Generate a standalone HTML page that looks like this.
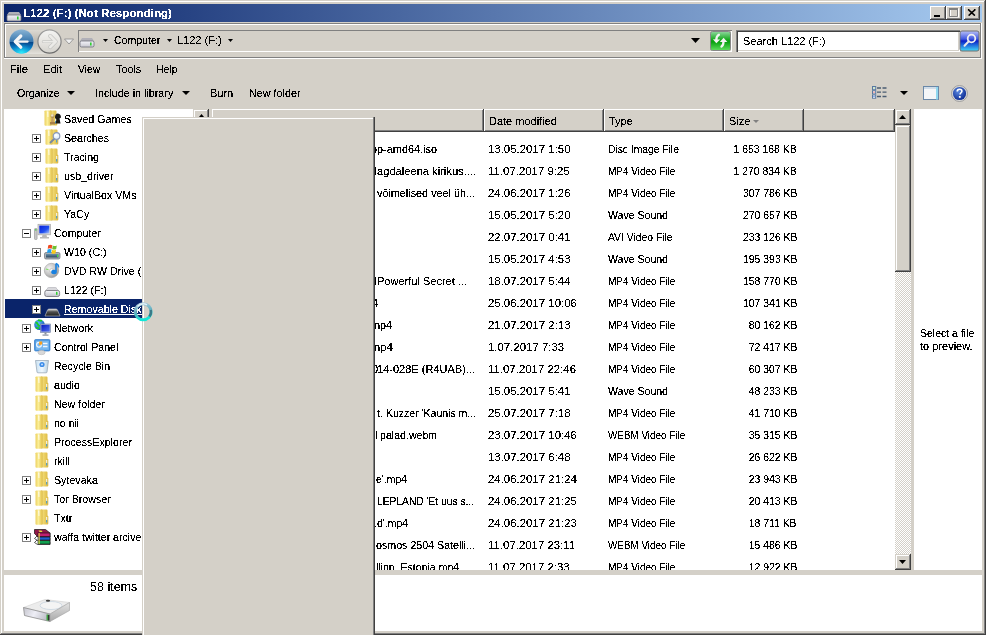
<!DOCTYPE html>
<html><head><meta charset="utf-8"><style>
html,body{margin:0;padding:0;}
body{width:986px;height:635px;overflow:hidden;position:relative;background:#d4d0c8;font-family:"Liberation Sans",sans-serif;font-size:11px;color:#000;}
.t{position:absolute;font:11px/13px "Liberation Sans",sans-serif;white-space:nowrap;filter:url(#crisp)}
.tb{position:absolute;font:bold 11px/13px "Liberation Sans",sans-serif;white-space:nowrap;color:#fff;filter:url(#crisp)}
svg{display:block;overflow:visible}
</style></head><body>
<svg width="0" height="0" style="position:absolute;left:0;top:0"><filter id="crisp" color-interpolation-filters="sRGB"><feComponentTransfer><feFuncA type="discrete" tableValues="0 0 1 1 1"/></feComponentTransfer></filter></svg>
<div style="position:absolute;left:1px;top:1px;width:984px;height:1px;background:#fff"></div>
<div style="position:absolute;left:1px;top:1px;width:1px;height:633px;background:#fff"></div>
<div style="position:absolute;left:984px;top:1px;width:1px;height:633px;background:#808080"></div>
<div style="position:absolute;left:1px;top:633px;width:984px;height:1px;background:#808080"></div>
<div style="position:absolute;left:985px;top:0px;width:1px;height:635px;background:#404040"></div>
<div style="position:absolute;left:0px;top:634px;width:986px;height:1px;background:#404040"></div>
<div style="position:absolute;left:4px;top:4px;width:978px;height:18px;background:linear-gradient(to right,#0a246a,#a6caf0)"></div>
<svg style="position:absolute;left:6px;top:7px" width="16" height="16" viewBox="0 0 16 16"><defs><linearGradient id="dg" x1="0" y1="0" x2="0" y2="1"><stop offset="0" stop-color="#f4f4fa"/><stop offset="1" stop-color="#c8c8d0"/></linearGradient></defs><path d="M3 5h10l2 3v6H1V8z" fill="#b0b0b8"/><rect x="1" y="8" width="14" height="6" rx="1.5" fill="url(#dg)" stroke="#707078" stroke-width="0.8"/><rect x="11" y="9.5" width="1.6" height="3" fill="#30d030"/></svg>
<div class="tb" style="left:23px;top:7px;transform:scaleX(1.0553);transform-origin:0 0">L122 (F:) (Not Responding)</div>
<div style="position:absolute;left:930px;top:6px;width:16px;height:14px;background:#d4d0c8;box-shadow:inset -1px -1px 0 #404040, inset 1px 1px 0 #fff, inset -2px -2px 0 #808080"></div>
<svg style="position:absolute;left:930px;top:6px" width="16" height="14" viewBox="0 0 16 14"><rect x="4" y="9" width="6" height="2" fill="#000"/></svg>
<div style="position:absolute;left:946px;top:6px;width:16px;height:14px;background:#d4d0c8;box-shadow:inset -1px -1px 0 #404040, inset 1px 1px 0 #fff, inset -2px -2px 0 #808080"></div>
<svg style="position:absolute;left:946px;top:6px" width="16" height="14" viewBox="0 0 16 14"><rect x="4.5" y="3" width="8" height="8" fill="none" stroke="#fff" stroke-width="1"/><path d="M3.5 2.5h8v8h-8z M3 2.5h9" fill="none" stroke="#808080" stroke-width="1"/><rect x="3" y="2" width="9" height="2" fill="#808080"/></svg>
<div style="position:absolute;left:964px;top:6px;width:16px;height:14px;background:#d4d0c8;box-shadow:inset -1px -1px 0 #404040, inset 1px 1px 0 #fff, inset -2px -2px 0 #808080"></div>
<svg style="position:absolute;left:964px;top:6px" width="16" height="14" viewBox="0 0 16 14"><path d="M4.5 3.5l6.5 6M4 3.5l6.5 6M11 3.5l-6.5 6M11.5 3.5l-6.5 6" stroke="#000" stroke-width="1.1"/></svg>
<div style="position:absolute;left:4px;top:23px;width:977px;height:1px;background:#808080"></div>
<div style="position:absolute;left:4px;top:23px;width:1px;height:35px;background:#808080"></div>
<div style="position:absolute;left:5px;top:24px;width:975px;height:1px;background:#fff"></div>
<div style="position:absolute;left:5px;top:24px;width:1px;height:33px;background:#fff"></div>
<div style="position:absolute;left:5px;top:57px;width:976px;height:1px;background:#808080"></div>
<div style="position:absolute;left:980px;top:24px;width:1px;height:34px;background:#808080"></div>
<div style="position:absolute;left:4px;top:58px;width:978px;height:1px;background:#fff"></div>
<div style="position:absolute;left:981px;top:23px;width:1px;height:36px;background:#fff"></div>
<div style="position:absolute;left:14px;top:30px;width:44px;height:24px;border-radius:12px/10px;background:linear-gradient(#dcd9d2,#bdb9b1 45%,#c8c4bc 70%,#e4e2dc)"></div>
<svg style="position:absolute;left:9px;top:29px" width="26" height="26" viewBox="0 0 26 26"><defs><linearGradient id="bu" x1="0" y1="0" x2="0" y2="1"><stop offset="0" stop-color="#8ab4d4"/><stop offset="0.5" stop-color="#3a78ae"/><stop offset="0.5" stop-color="#063e80"/><stop offset="0.75" stop-color="#0a78c0"/><stop offset="1" stop-color="#18c8f0"/></linearGradient><radialGradient id="bl" cx="0.5" cy="1" r="0.45"><stop offset="0" stop-color="#30f8ff" stop-opacity="0.95"/><stop offset="1" stop-color="#10a0e0" stop-opacity="0"/></radialGradient></defs><circle cx="12.5" cy="12.5" r="12.6" fill="#c8ccd0" opacity="0.6"/><circle cx="12.5" cy="12.5" r="12" fill="url(#bu)"/><circle cx="12.5" cy="12.5" r="12" fill="url(#bl)"/><path d="M11.8 7L6.2 12.6L11.8 18.2" fill="none" stroke="#f8f8f8" stroke-width="3.2" stroke-linecap="round" stroke-linejoin="round"/><path d="M8 12.6H18.6" stroke="#f4f4f4" stroke-width="2.2" stroke-linecap="round"/></svg>
<svg style="position:absolute;left:37px;top:29px" width="26" height="26" viewBox="0 0 26 26"><defs><linearGradient id="fw" x1="0" y1="0" x2="0" y2="1"><stop offset="0" stop-color="#f4f4f2"/><stop offset="0.6" stop-color="#e4e2de"/><stop offset="1" stop-color="#d4d2cc"/></linearGradient><linearGradient id="fr" x1="0" y1="0" x2="0" y2="1"><stop offset="0" stop-color="#a0a0a0"/><stop offset="1" stop-color="#6c6c6c"/></linearGradient></defs><circle cx="12.5" cy="12.5" r="11.6" fill="url(#fw)" stroke="url(#fr)" stroke-width="1.2"/><path d="M13.2 7L18.8 12.6L13.2 18.2" fill="none" stroke="#c4c4c2" stroke-width="4" stroke-linecap="round" stroke-linejoin="round"/><path d="M17 12.6H6.4" stroke="#c4c4c2" stroke-width="3" stroke-linecap="round"/><path d="M13.2 7L18.8 12.6L13.2 18.2" fill="none" stroke="#ecebe8" stroke-width="2.6" stroke-linecap="round" stroke-linejoin="round"/><path d="M17 12.6H6.4" stroke="#ecebe8" stroke-width="1.8" stroke-linecap="round"/></svg>
<svg style="position:absolute;left:64px;top:38px" width="10" height="8" viewBox="0 0 10 8"><path d="M0.5 1h9l-4.5 5z" fill="#f0f0f0" stroke="#8a8a8a" stroke-width="0.8"/></svg>
<div style="position:absolute;left:78px;top:30px;width:654px;height:22px;box-shadow:inset 1px 1px 0 #808080, inset -1px -1px 0 #fff;background:#d4d0c8"></div>
<svg style="position:absolute;left:79px;top:33px" width="16" height="16" viewBox="0 0 16 16"><defs><linearGradient id="dg" x1="0" y1="0" x2="0" y2="1"><stop offset="0" stop-color="#f4f4fa"/><stop offset="1" stop-color="#c8c8d0"/></linearGradient></defs><path d="M3 5h10l2 3v6H1V8z" fill="#b0b0b8"/><rect x="1" y="8" width="14" height="6" rx="1.5" fill="url(#dg)" stroke="#707078" stroke-width="0.8"/><rect x="11" y="9.5" width="1.6" height="3" fill="#30d030"/></svg>
<svg style="position:absolute;left:103px;top:39px" width="5" height="3" viewBox="0 0 5 3"><path d="M0 0h5l-2.5 3z" fill="#000"/></svg>
<div class="t" style="left:114px;top:34px;transform:scaleX(0.9586);transform-origin:0 0">Computer</div>
<svg style="position:absolute;left:167px;top:39px" width="5" height="3" viewBox="0 0 5 3"><path d="M0 0h5l-2.5 3z" fill="#000"/></svg>
<div class="t" style="left:177px;top:34px;">L122 (F:)</div>
<svg style="position:absolute;left:228px;top:39px" width="5" height="3" viewBox="0 0 5 3"><path d="M0 0h5l-2.5 3z" fill="#000"/></svg>
<svg style="position:absolute;left:691px;top:38px" width="9" height="5" viewBox="0 0 9 5"><path d="M0 0h9l-4.5 5z" fill="#000"/></svg>
<svg style="position:absolute;left:710px;top:31px" width="21" height="20" viewBox="0 0 21 20"><defs><linearGradient id="rg" x1="0" y1="0" x2="0" y2="1"><stop offset="0" stop-color="#90d8a0"/><stop offset="0.45" stop-color="#10a818"/><stop offset="0.55" stop-color="#08a010"/><stop offset="1" stop-color="#60e060"/></linearGradient></defs><rect x="0.5" y="0.5" width="20" height="19" rx="2" fill="url(#rg)" stroke="#888" stroke-width="1"/><path d="M2.9 8.2L10.2 8.5L6.3 12.3Z" fill="#f4f4f4"/><path d="M6.3 9c0-2.8.6-4.3 2.6-5.3" stroke="#f4f4f4" stroke-width="2.3" fill="none" stroke-linecap="round"/><path d="M9.8 10.9L17.3 11.1L13.6 6.8Z" fill="#f4f4f4"/><path d="M13.5 10.5c0 2.5-.5 4-2 5" stroke="#f4f4f4" stroke-width="2.3" fill="none" stroke-linecap="round"/></svg>
<div style="position:absolute;left:736px;top:30px;width:224px;height:22px;background:#fff;box-shadow:inset 1px 1px 0 #808080, inset 2px 2px 0 #404040, inset -1px -1px 0 #fff, inset -2px -2px 0 #d4d0c8"></div>
<div class="t" style="left:743px;top:35px;">Search L122 (F:)</div>
<svg style="position:absolute;left:959px;top:30px" width="21" height="22" viewBox="0 0 21 22"><defs><linearGradient id="sg" x1="0" y1="0" x2="0" y2="1"><stop offset="0" stop-color="#b8c0f8"/><stop offset="0.4" stop-color="#4058e0"/><stop offset="0.5" stop-color="#0a20c8"/><stop offset="1" stop-color="#40d8f8"/></linearGradient></defs><rect x="1" y="1" width="19" height="20" rx="2" fill="url(#sg)" stroke="#707070" stroke-width="1"/><circle cx="12.5" cy="8.5" r="3.8" fill="none" stroke="#f0f0f0" stroke-width="1.8"/><path d="M9.8 11.3L5.5 15.8" stroke="#e8e8e8" stroke-width="2" stroke-linecap="round"/></svg>
<div class="t" style="left:10px;top:63px;transform:scaleX(1.0226);transform-origin:0 0">File</div>
<div class="t" style="left:43px;top:63px;transform:scaleX(1.0106);transform-origin:0 0">Edit</div>
<div class="t" style="left:78px;top:63px;transform:scaleX(0.9408);transform-origin:0 0">View</div>
<div class="t" style="left:116px;top:63px;transform:scaleX(0.9805);transform-origin:0 0">Tools</div>
<div class="t" style="left:156px;top:63px;transform:scaleX(0.9558);transform-origin:0 0">Help</div>
<div class="t" style="left:17px;top:87px;transform:scaleX(0.9552);transform-origin:0 0">Organize</div>
<svg style="position:absolute;left:67px;top:91px" width="8" height="4" viewBox="0 0 8 4"><path d="M0 0h8l-4 4z" fill="#000"/></svg>
<div class="t" style="left:95px;top:87px;transform:scaleX(0.9775);transform-origin:0 0">Include in library</div>
<svg style="position:absolute;left:182px;top:91px" width="8" height="4" viewBox="0 0 8 4"><path d="M0 0h8l-4 4z" fill="#000"/></svg>
<div class="t" style="left:210px;top:87px;">Burn</div>
<div class="t" style="left:249px;top:87px;transform:scaleX(0.9810);transform-origin:0 0">New folder</div>
<svg style="position:absolute;left:872px;top:86px" width="16" height="13" viewBox="0 0 16 13"><rect x="0.5" y="0.5" width="3.2" height="3.2" fill="#fff" stroke="#5878a0" stroke-width="1"/><rect x="0.5" y="4.7" width="3.2" height="3.2" fill="#fff" stroke="#5878a0" stroke-width="1"/><rect x="0.5" y="9" width="3.2" height="3.2" fill="#fff" stroke="#5878a0" stroke-width="1"/><rect x="1.5" y="1.5" width="1" height="1" fill="#40a040"/><rect x="1.5" y="5.7" width="1" height="1" fill="#e02020"/><rect x="1.5" y="10" width="1" height="1" fill="#2060e0"/><path d="M5 2h4M10.5 2h4M5 6.2h4M10.5 6.2h4M5 10.5h4M10.5 10.5h4" stroke="#4a5c72" stroke-width="1.3"/></svg>
<svg style="position:absolute;left:900px;top:91px" width="8" height="4" viewBox="0 0 8 4"><path d="M0 0h8l-4 4z" fill="#000"/></svg>
<svg style="position:absolute;left:923px;top:86px" width="17" height="15" viewBox="0 0 17 15"><rect x="0.5" y="0.5" width="15" height="13" fill="#f4f6f8" stroke="#6a88a8" stroke-width="1"/><rect x="1" y="1" width="14" height="2" fill="#d0dce8"/><rect x="13" y="1" width="2" height="12.5" fill="#90d8f0"/></svg>
<svg style="position:absolute;left:951px;top:85px" width="17" height="17" viewBox="0 0 17 17"><defs><radialGradient id="hg" cx="0.4" cy="0.35" r="0.7"><stop offset="0" stop-color="#5a88e0"/><stop offset="1" stop-color="#0a2890"/></radialGradient></defs><circle cx="8.5" cy="8.5" r="8" fill="#d8d8d8" stroke="#909090" stroke-width="0.8"/><circle cx="8.5" cy="8.5" r="6.6" fill="url(#hg)"/><path d="M6.2 6.5c0-1.5 1-2.3 2.4-2.3s2.3.8 2.3 2c0 1.5-1.8 1.6-1.8 3.2" fill="none" stroke="#fff" stroke-width="1.6"/><rect x="7.9" y="11" width="1.8" height="1.8" fill="#fff"/></svg>
<div style="position:absolute;left:4px;top:109px;width:189px;height:461px;background:#fff"></div>
<svg style="position:absolute;left:44px;top:109.5px" width="14" height="16" viewBox="0 0 14 16"><defs><linearGradient id="fgf" x1="0" x2="1"><stop offset="0" stop-color="#ecd060"/><stop offset="0.45" stop-color="#fbef98"/><stop offset="1" stop-color="#e4c450"/></linearGradient><linearGradient id="fgb" x1="0" x2="1"><stop offset="0" stop-color="#c8a438"/><stop offset="0.3" stop-color="#f0d870"/><stop offset="1" stop-color="#dcb840"/></linearGradient><linearGradient id="fgi" x1="0" y1="0" x2="0" y2="1"><stop offset="0" stop-color="#fff"/><stop offset="0.5" stop-color="#e0f0ff"/><stop offset="0.6" stop-color="#3898e0"/><stop offset="1" stop-color="#3898e0"/></linearGradient></defs><path d="M6 0.5h5.5q1 0 1 1v5l0.8 0.7v7.3q0 1-1 1H6z" fill="url(#fgb)"/><path d="M0.5 1.2q0-0.7 1-0.7h4.5q1 0 1 1v13.5l-1.5 0.8H1.5q-1 0-1-1z" fill="url(#fgf)"/><path d="M3.2 1.5h1.2v5.5h-0.8z" fill="#fff" opacity="0.9"/><rect x="11.2" y="8" width="1" height="5.5" fill="url(#fgi)"/></svg>
<svg style="position:absolute;left:49px;top:112px" width="12" height="14" viewBox="0 0 12 14"><defs><radialGradient id="pw" cx="0.4" cy="0.3" r="0.7"><stop offset="0" stop-color="#fff8e0"/><stop offset="1" stop-color="#a07838"/></radialGradient></defs><path d="M8.5 1.5c2 0 3.5 1.5 3.5 4l-1.5 1 1 5H6.5l1-4-1.5-1.5c0-3 1-4.5 2.5-4.5z" fill="#181818"/><circle cx="3.5" cy="4" r="2" fill="url(#pw)"/><path d="M2.5 6h2l0.5 4h-3z" fill="#c8a060"/><rect x="1" y="10" width="5" height="2.5" fill="#a88048"/></svg>
<div class="t" style="left:64px;top:113px;transform:scaleX(0.9716);transform-origin:0 0">Saved Games</div>
<svg style="position:absolute;left:32px;top:134px" width="9" height="9" viewBox="0 0 9 9"><rect x="0.5" y="0.5" width="8" height="8" fill="#fff" stroke="#808080"/><path d="M2 4.5h5M4.5 2v5" stroke="#000" stroke-width="1"/></svg>
<svg style="position:absolute;left:45px;top:128.5px" width="14" height="16" viewBox="0 0 14 16"><defs><linearGradient id="fgf" x1="0" x2="1"><stop offset="0" stop-color="#ecd060"/><stop offset="0.45" stop-color="#fbef98"/><stop offset="1" stop-color="#e4c450"/></linearGradient><linearGradient id="fgb" x1="0" x2="1"><stop offset="0" stop-color="#c8a438"/><stop offset="0.3" stop-color="#f0d870"/><stop offset="1" stop-color="#dcb840"/></linearGradient><linearGradient id="fgi" x1="0" y1="0" x2="0" y2="1"><stop offset="0" stop-color="#fff"/><stop offset="0.5" stop-color="#e0f0ff"/><stop offset="0.6" stop-color="#3898e0"/><stop offset="1" stop-color="#3898e0"/></linearGradient></defs><path d="M6 0.5h5.5q1 0 1 1v5l0.8 0.7v7.3q0 1-1 1H6z" fill="url(#fgb)"/><path d="M0.5 1.2q0-0.7 1-0.7h4.5q1 0 1 1v13.5l-1.5 0.8H1.5q-1 0-1-1z" fill="url(#fgf)"/><path d="M3.2 1.5h1.2v5.5h-0.8z" fill="#fff" opacity="0.9"/><rect x="11.2" y="8" width="1" height="5.5" fill="url(#fgi)"/></svg>
<svg style="position:absolute;left:49px;top:131px" width="12" height="14" viewBox="0 0 12 14"><path d="M5.5 7.5L1.5 11.5" stroke="#7888a0" stroke-width="1.8" stroke-linecap="round"/><circle cx="7.5" cy="5" r="3.3" fill="#e8f4ff" stroke="#8898b8" stroke-width="1.2"/><circle cx="7" cy="4.3" r="1.2" fill="#fff"/></svg>
<div class="t" style="left:64px;top:132px;transform:scaleX(0.9690);transform-origin:0 0">Searches</div>
<svg style="position:absolute;left:32px;top:153px" width="9" height="9" viewBox="0 0 9 9"><rect x="0.5" y="0.5" width="8" height="8" fill="#fff" stroke="#808080"/><path d="M2 4.5h5M4.5 2v5" stroke="#000" stroke-width="1"/></svg>
<svg style="position:absolute;left:45px;top:147.5px" width="14" height="16" viewBox="0 0 14 16"><defs><linearGradient id="fgf" x1="0" x2="1"><stop offset="0" stop-color="#ecd060"/><stop offset="0.45" stop-color="#fbef98"/><stop offset="1" stop-color="#e4c450"/></linearGradient><linearGradient id="fgb" x1="0" x2="1"><stop offset="0" stop-color="#c8a438"/><stop offset="0.3" stop-color="#f0d870"/><stop offset="1" stop-color="#dcb840"/></linearGradient><linearGradient id="fgi" x1="0" y1="0" x2="0" y2="1"><stop offset="0" stop-color="#fff"/><stop offset="0.5" stop-color="#e0f0ff"/><stop offset="0.6" stop-color="#3898e0"/><stop offset="1" stop-color="#3898e0"/></linearGradient></defs><path d="M6 0.5h5.5q1 0 1 1v5l0.8 0.7v7.3q0 1-1 1H6z" fill="url(#fgb)"/><path d="M0.5 1.2q0-0.7 1-0.7h4.5q1 0 1 1v13.5l-1.5 0.8H1.5q-1 0-1-1z" fill="url(#fgf)"/><path d="M3.2 1.5h1.2v5.5h-0.8z" fill="#fff" opacity="0.9"/><rect x="11.2" y="8" width="1" height="5.5" fill="url(#fgi)"/></svg>
<div class="t" style="left:64px;top:151px;transform:scaleX(0.9653);transform-origin:0 0">Tracing</div>
<svg style="position:absolute;left:32px;top:172px" width="9" height="9" viewBox="0 0 9 9"><rect x="0.5" y="0.5" width="8" height="8" fill="#fff" stroke="#808080"/><path d="M2 4.5h5M4.5 2v5" stroke="#000" stroke-width="1"/></svg>
<svg style="position:absolute;left:45px;top:166.5px" width="14" height="16" viewBox="0 0 14 16"><defs><linearGradient id="fgf" x1="0" x2="1"><stop offset="0" stop-color="#ecd060"/><stop offset="0.45" stop-color="#fbef98"/><stop offset="1" stop-color="#e4c450"/></linearGradient><linearGradient id="fgb" x1="0" x2="1"><stop offset="0" stop-color="#c8a438"/><stop offset="0.3" stop-color="#f0d870"/><stop offset="1" stop-color="#dcb840"/></linearGradient><linearGradient id="fgi" x1="0" y1="0" x2="0" y2="1"><stop offset="0" stop-color="#fff"/><stop offset="0.5" stop-color="#e0f0ff"/><stop offset="0.6" stop-color="#3898e0"/><stop offset="1" stop-color="#3898e0"/></linearGradient></defs><path d="M6 0.5h5.5q1 0 1 1v5l0.8 0.7v7.3q0 1-1 1H6z" fill="url(#fgb)"/><path d="M0.5 1.2q0-0.7 1-0.7h4.5q1 0 1 1v13.5l-1.5 0.8H1.5q-1 0-1-1z" fill="url(#fgf)"/><path d="M3.2 1.5h1.2v5.5h-0.8z" fill="#fff" opacity="0.9"/><rect x="11.2" y="8" width="1" height="5.5" fill="url(#fgi)"/></svg>
<div class="t" style="left:64px;top:170px;transform:scaleX(0.9650);transform-origin:0 0">usb_driver</div>
<svg style="position:absolute;left:32px;top:191px" width="9" height="9" viewBox="0 0 9 9"><rect x="0.5" y="0.5" width="8" height="8" fill="#fff" stroke="#808080"/><path d="M2 4.5h5M4.5 2v5" stroke="#000" stroke-width="1"/></svg>
<svg style="position:absolute;left:45px;top:185.5px" width="14" height="16" viewBox="0 0 14 16"><defs><linearGradient id="fgf" x1="0" x2="1"><stop offset="0" stop-color="#ecd060"/><stop offset="0.45" stop-color="#fbef98"/><stop offset="1" stop-color="#e4c450"/></linearGradient><linearGradient id="fgb" x1="0" x2="1"><stop offset="0" stop-color="#c8a438"/><stop offset="0.3" stop-color="#f0d870"/><stop offset="1" stop-color="#dcb840"/></linearGradient><linearGradient id="fgi" x1="0" y1="0" x2="0" y2="1"><stop offset="0" stop-color="#fff"/><stop offset="0.5" stop-color="#e0f0ff"/><stop offset="0.6" stop-color="#3898e0"/><stop offset="1" stop-color="#3898e0"/></linearGradient></defs><path d="M6 0.5h5.5q1 0 1 1v5l0.8 0.7v7.3q0 1-1 1H6z" fill="url(#fgb)"/><path d="M0.5 1.2q0-0.7 1-0.7h4.5q1 0 1 1v13.5l-1.5 0.8H1.5q-1 0-1-1z" fill="url(#fgf)"/><path d="M3.2 1.5h1.2v5.5h-0.8z" fill="#fff" opacity="0.9"/><rect x="11.2" y="8" width="1" height="5.5" fill="url(#fgi)"/></svg>
<div class="t" style="left:64px;top:189px;transform:scaleX(0.9664);transform-origin:0 0">VirtualBox VMs</div>
<svg style="position:absolute;left:32px;top:210px" width="9" height="9" viewBox="0 0 9 9"><rect x="0.5" y="0.5" width="8" height="8" fill="#fff" stroke="#808080"/><path d="M2 4.5h5M4.5 2v5" stroke="#000" stroke-width="1"/></svg>
<svg style="position:absolute;left:45px;top:204.5px" width="14" height="16" viewBox="0 0 14 16"><defs><linearGradient id="fgf" x1="0" x2="1"><stop offset="0" stop-color="#ecd060"/><stop offset="0.45" stop-color="#fbef98"/><stop offset="1" stop-color="#e4c450"/></linearGradient><linearGradient id="fgb" x1="0" x2="1"><stop offset="0" stop-color="#c8a438"/><stop offset="0.3" stop-color="#f0d870"/><stop offset="1" stop-color="#dcb840"/></linearGradient><linearGradient id="fgi" x1="0" y1="0" x2="0" y2="1"><stop offset="0" stop-color="#fff"/><stop offset="0.5" stop-color="#e0f0ff"/><stop offset="0.6" stop-color="#3898e0"/><stop offset="1" stop-color="#3898e0"/></linearGradient></defs><path d="M6 0.5h5.5q1 0 1 1v5l0.8 0.7v7.3q0 1-1 1H6z" fill="url(#fgb)"/><path d="M0.5 1.2q0-0.7 1-0.7h4.5q1 0 1 1v13.5l-1.5 0.8H1.5q-1 0-1-1z" fill="url(#fgf)"/><path d="M3.2 1.5h1.2v5.5h-0.8z" fill="#fff" opacity="0.9"/><rect x="11.2" y="8" width="1" height="5.5" fill="url(#fgi)"/></svg>
<div class="t" style="left:64px;top:208px;transform:scaleX(0.9724);transform-origin:0 0">YaCy</div>
<svg style="position:absolute;left:22px;top:229px" width="9" height="9" viewBox="0 0 9 9"><rect x="0.5" y="0.5" width="8" height="8" fill="#fff" stroke="#808080"/><path d="M2 4.5h5" stroke="#000" stroke-width="1"/></svg>
<svg style="position:absolute;left:34px;top:224px" width="17" height="17" viewBox="0 0 17 17"><defs><linearGradient id="cs" x1="0" y1="0" x2="1" y2="1"><stop offset="0" stop-color="#0a20d8"/><stop offset="0.6" stop-color="#2050f0"/><stop offset="1" stop-color="#b0c8f8"/></linearGradient></defs><rect x="0.5" y="4.5" width="2.6" height="11" rx="0.8" fill="#c8c8c8" stroke="#909090" stroke-width="0.6"/><rect x="1.1" y="5.3" width="1.4" height="1.2" fill="#30d030"/><rect x="4" y="0.3" width="12.5" height="10.5" fill="#d8d8d8" stroke="#a8a8a8" stroke-width="0.7"/><rect x="5.3" y="1.6" width="10" height="7.8" fill="url(#cs)"/><path d="M8.5 11h4l0.5 2h2v1.5h-9V13h2z" fill="#b8b8b8"/></svg>
<div class="t" style="left:54px;top:227px;transform:scaleX(0.9702);transform-origin:0 0">Computer</div>
<svg style="position:absolute;left:32px;top:248px" width="9" height="9" viewBox="0 0 9 9"><rect x="0.5" y="0.5" width="8" height="8" fill="#fff" stroke="#808080"/><path d="M2 4.5h5M4.5 2v5" stroke="#000" stroke-width="1"/></svg>
<svg style="position:absolute;left:44px;top:243px" width="17" height="17" viewBox="0 0 17 17"><defs><linearGradient id="wd" x1="0" y1="0" x2="0" y2="1"><stop offset="0" stop-color="#6890a8"/><stop offset="1" stop-color="#304860"/></linearGradient></defs><rect x="0.5" y="9.5" width="15.5" height="6.5" rx="1.5" fill="#a8b0b8" stroke="#687078" stroke-width="0.7"/><rect x="2" y="11" width="12.5" height="3.5" fill="url(#wd)"/><rect x="13" y="11.5" width="1.2" height="2.5" fill="#40e040"/><path d="M4.3 2.2q2-1 4 0l-0.6 3.6q-2-1-4 0z" fill="#f04a20"/><path d="M8.8 2.5q2 1 4 0l-0.6 3.6q-2 1-4 0z" fill="#70c030"/><path d="M3.6 6.4q2-1 4 0l-0.6 3.6q-2-1-4 0z" fill="#20a0f0"/><path d="M8.1 6.7q2 1 4 0l-0.6 3.6q-2 1-4 0z" fill="#f8c818"/></svg>
<div class="t" style="left:64px;top:246px;transform:scaleX(0.9673);transform-origin:0 0">W10 (C:)</div>
<svg style="position:absolute;left:32px;top:267px" width="9" height="9" viewBox="0 0 9 9"><rect x="0.5" y="0.5" width="8" height="8" fill="#fff" stroke="#808080"/><path d="M2 4.5h5M4.5 2v5" stroke="#000" stroke-width="1"/></svg>
<svg style="position:absolute;left:44px;top:262px" width="17" height="17" viewBox="0 0 17 17"><defs><radialGradient id="dv" cx="0.35" cy="0.35" r="0.75"><stop offset="0" stop-color="#f4f4f4"/><stop offset="0.6" stop-color="#c0c0c0"/><stop offset="1" stop-color="#909090"/></radialGradient></defs><circle cx="7.5" cy="8.5" r="7.2" fill="url(#dv)" stroke="#989898" stroke-width="0.5"/><circle cx="7.5" cy="8.5" r="1.8" fill="#fff" stroke="#a0a0a0" stroke-width="0.5"/><path d="M2 7l2.5 0.8" stroke="#80e060" stroke-width="1.2"/><path d="M12 1.5v8" stroke="#1880e0" stroke-width="1.6"/><path d="M12 1.5c2 1 3 2 2.5 4" stroke="#1880e0" stroke-width="1.4" fill="none"/><ellipse cx="10" cy="10" rx="2.8" ry="2.2" fill="#1880e0"/></svg>
<div class="t" style="left:64px;top:265px;transform:scaleX(0.9668);transform-origin:0 0">DVD RW Drive (D:) </div>
<svg style="position:absolute;left:32px;top:286px" width="9" height="9" viewBox="0 0 9 9"><rect x="0.5" y="0.5" width="8" height="8" fill="#fff" stroke="#808080"/><path d="M2 4.5h5M4.5 2v5" stroke="#000" stroke-width="1"/></svg>
<svg style="position:absolute;left:44px;top:281px" width="17" height="17" viewBox="0 0 17 17"><defs><linearGradient id="dr" x1="0" y1="0" x2="0" y2="1"><stop offset="0" stop-color="#f8f8fc"/><stop offset="1" stop-color="#c0c0c8"/></linearGradient></defs><path d="M3.5 7.5q0-1 1-1h7q1 0 1 1l2 2h-13z" fill="#d8d8dc" stroke="#a0a0a8" stroke-width="0.5"/><rect x="0.8" y="9.5" width="14.8" height="6" rx="1.8" fill="url(#dr)" stroke="#6c6c74" stroke-width="0.8"/><rect x="12" y="10.8" width="1.5" height="3" fill="#30d030"/></svg>
<div class="t" style="left:64px;top:284px;transform:scaleX(0.9637);transform-origin:0 0">L122 (F:)</div>
<div style="position:absolute;left:5px;top:299px;width:140px;height:19px;background:#0a246a"></div>
<svg style="position:absolute;left:32px;top:305px" width="9" height="9" viewBox="0 0 9 9"><rect x="0.5" y="0.5" width="8" height="8" fill="#fff" stroke="#808080"/><path d="M2 4.5h5M4.5 2v5" stroke="#000" stroke-width="1"/></svg>
<svg style="position:absolute;left:44px;top:300px" width="17" height="17" viewBox="0 0 17 17"><defs><linearGradient id="rm" x1="0" y1="0" x2="0" y2="1"><stop offset="0" stop-color="#e0e0e0"/><stop offset="0.4" stop-color="#505050"/><stop offset="1" stop-color="#202020"/></linearGradient></defs><path d="M1 16l2.5-6q0.5-1 1.5-1h7q1 0 1.5 1l2.5 6z" fill="url(#rm)" stroke="#c8c8c8" stroke-width="0.6"/></svg>
<div class="t" style="left:64px;top:303px;color:#fff;text-decoration:underline;transform:scaleX(0.9685);transform-origin:0 0">Removable Disk</div>
<svg style="position:absolute;left:22px;top:324px" width="9" height="9" viewBox="0 0 9 9"><rect x="0.5" y="0.5" width="8" height="8" fill="#fff" stroke="#808080"/><path d="M2 4.5h5M4.5 2v5" stroke="#000" stroke-width="1"/></svg>
<svg style="position:absolute;left:34px;top:319px" width="17" height="17" viewBox="0 0 17 17"><defs><radialGradient id="gl" cx="0.4" cy="0.35" r="0.7"><stop offset="0" stop-color="#60c0ff"/><stop offset="1" stop-color="#0850b0"/></radialGradient><linearGradient id="nm" x1="0" y1="0" x2="1" y2="1"><stop offset="0" stop-color="#0818c0"/><stop offset="1" stop-color="#5070f0"/></linearGradient></defs><circle cx="5.5" cy="5.8" r="5.3" fill="url(#gl)"/><path d="M1.5 3.5q2 0 2.5 2t2 1M4 1q2 1 4 0.5M2 8.5q1.5 1 3 0.5" stroke="#20d020" stroke-width="1.8" fill="none"/><rect x="6.5" y="5" width="10" height="8.5" fill="#c0c8d8" stroke="#6878a0" stroke-width="0.6"/><rect x="7.3" y="5.8" width="8.4" height="6.8" fill="url(#nm)"/><rect x="10.5" y="13.5" width="2" height="2" fill="#8890a0"/><rect x="8.5" y="15.5" width="6" height="1.2" fill="#8890a0"/></svg>
<div class="t" style="left:54px;top:322px;transform:scaleX(0.9688);transform-origin:0 0">Network</div>
<svg style="position:absolute;left:22px;top:343px" width="9" height="9" viewBox="0 0 9 9"><rect x="0.5" y="0.5" width="8" height="8" fill="#fff" stroke="#808080"/><path d="M2 4.5h5M4.5 2v5" stroke="#000" stroke-width="1"/></svg>
<svg style="position:absolute;left:34px;top:338px" width="17" height="17" viewBox="0 0 17 17"><rect x="0.5" y="1.5" width="15.5" height="11.5" rx="1.2" fill="#4a98e0" stroke="#3478c8" stroke-width="0.7"/><rect x="1.8" y="2.8" width="13" height="9" fill="#78b8f0"/><circle cx="5" cy="6.8" r="2.4" fill="none" stroke="#f0f8ff" stroke-width="1.2"/><path d="M5 4.4v2.4h2.4" fill="#f8a020"/><path d="M5.2 3.5h3v3h-3z" fill="#f8a020"/><path d="M9 5.5h4.5M9 8.5h4.5" stroke="#f0f8ff" stroke-width="1.4"/><ellipse cx="7.5" cy="14.5" rx="3.6" ry="2.2" fill="#d8d8d8" stroke="#b0b0b0" stroke-width="0.5"/></svg>
<div class="t" style="left:54px;top:341px;transform:scaleX(0.9649);transform-origin:0 0">Control Panel</div>
<svg style="position:absolute;left:34px;top:357px" width="17" height="17" viewBox="0 0 17 17"><defs><linearGradient id="rb" x1="0" x2="1"><stop offset="0" stop-color="#c8e0f0"/><stop offset="0.5" stop-color="#f0f8ff"/><stop offset="1" stop-color="#b8d0e0"/></linearGradient></defs><path d="M1.5 3.5h13l-1.5 11.5q0 0.8-1 0.8h-8q-1 0-1-0.8z" fill="url(#rb)" stroke="#90a0b0" stroke-width="0.7"/><circle cx="8" cy="7.5" r="2.6" fill="#3c8ce8"/><circle cx="8" cy="7.5" r="1" fill="#c8e0ff"/></svg>
<div class="t" style="left:54px;top:360px;transform:scaleX(0.9659);transform-origin:0 0">Recycle Bin</div>
<svg style="position:absolute;left:35px;top:375.5px" width="14" height="16" viewBox="0 0 14 16"><defs><linearGradient id="fgf" x1="0" x2="1"><stop offset="0" stop-color="#ecd060"/><stop offset="0.45" stop-color="#fbef98"/><stop offset="1" stop-color="#e4c450"/></linearGradient><linearGradient id="fgb" x1="0" x2="1"><stop offset="0" stop-color="#c8a438"/><stop offset="0.3" stop-color="#f0d870"/><stop offset="1" stop-color="#dcb840"/></linearGradient><linearGradient id="fgi" x1="0" y1="0" x2="0" y2="1"><stop offset="0" stop-color="#fff"/><stop offset="0.5" stop-color="#e0f0ff"/><stop offset="0.6" stop-color="#3898e0"/><stop offset="1" stop-color="#3898e0"/></linearGradient></defs><path d="M6 0.5h5.5q1 0 1 1v5l0.8 0.7v7.3q0 1-1 1H6z" fill="url(#fgb)"/><path d="M0.5 1.2q0-0.7 1-0.7h4.5q1 0 1 1v13.5l-1.5 0.8H1.5q-1 0-1-1z" fill="url(#fgf)"/><path d="M3.2 1.5h1.2v5.5h-0.8z" fill="#fff" opacity="0.9"/><rect x="11.2" y="8" width="1" height="5.5" fill="url(#fgi)"/></svg>
<div class="t" style="left:54px;top:379px;transform:scaleX(0.9666);transform-origin:0 0">audio</div>
<svg style="position:absolute;left:35px;top:394.5px" width="14" height="16" viewBox="0 0 14 16"><defs><linearGradient id="fgf" x1="0" x2="1"><stop offset="0" stop-color="#ecd060"/><stop offset="0.45" stop-color="#fbef98"/><stop offset="1" stop-color="#e4c450"/></linearGradient><linearGradient id="fgb" x1="0" x2="1"><stop offset="0" stop-color="#c8a438"/><stop offset="0.3" stop-color="#f0d870"/><stop offset="1" stop-color="#dcb840"/></linearGradient><linearGradient id="fgi" x1="0" y1="0" x2="0" y2="1"><stop offset="0" stop-color="#fff"/><stop offset="0.5" stop-color="#e0f0ff"/><stop offset="0.6" stop-color="#3898e0"/><stop offset="1" stop-color="#3898e0"/></linearGradient></defs><path d="M6 0.5h5.5q1 0 1 1v5l0.8 0.7v7.3q0 1-1 1H6z" fill="url(#fgb)"/><path d="M0.5 1.2q0-0.7 1-0.7h4.5q1 0 1 1v13.5l-1.5 0.8H1.5q-1 0-1-1z" fill="url(#fgf)"/><path d="M3.2 1.5h1.2v5.5h-0.8z" fill="#fff" opacity="0.9"/><rect x="11.2" y="8" width="1" height="5.5" fill="url(#fgi)"/></svg>
<div class="t" style="left:54px;top:398px;transform:scaleX(0.9658);transform-origin:0 0">New folder</div>
<svg style="position:absolute;left:35px;top:413.5px" width="14" height="16" viewBox="0 0 14 16"><defs><linearGradient id="fgf" x1="0" x2="1"><stop offset="0" stop-color="#ecd060"/><stop offset="0.45" stop-color="#fbef98"/><stop offset="1" stop-color="#e4c450"/></linearGradient><linearGradient id="fgb" x1="0" x2="1"><stop offset="0" stop-color="#c8a438"/><stop offset="0.3" stop-color="#f0d870"/><stop offset="1" stop-color="#dcb840"/></linearGradient><linearGradient id="fgi" x1="0" y1="0" x2="0" y2="1"><stop offset="0" stop-color="#fff"/><stop offset="0.5" stop-color="#e0f0ff"/><stop offset="0.6" stop-color="#3898e0"/><stop offset="1" stop-color="#3898e0"/></linearGradient></defs><path d="M6 0.5h5.5q1 0 1 1v5l0.8 0.7v7.3q0 1-1 1H6z" fill="url(#fgb)"/><path d="M0.5 1.2q0-0.7 1-0.7h4.5q1 0 1 1v13.5l-1.5 0.8H1.5q-1 0-1-1z" fill="url(#fgf)"/><path d="M3.2 1.5h1.2v5.5h-0.8z" fill="#fff" opacity="0.9"/><rect x="11.2" y="8" width="1" height="5.5" fill="url(#fgi)"/></svg>
<div class="t" style="left:54px;top:417px;transform:scaleX(0.9589);transform-origin:0 0">no nii</div>
<svg style="position:absolute;left:35px;top:432.5px" width="14" height="16" viewBox="0 0 14 16"><defs><linearGradient id="fgf" x1="0" x2="1"><stop offset="0" stop-color="#ecd060"/><stop offset="0.45" stop-color="#fbef98"/><stop offset="1" stop-color="#e4c450"/></linearGradient><linearGradient id="fgb" x1="0" x2="1"><stop offset="0" stop-color="#c8a438"/><stop offset="0.3" stop-color="#f0d870"/><stop offset="1" stop-color="#dcb840"/></linearGradient><linearGradient id="fgi" x1="0" y1="0" x2="0" y2="1"><stop offset="0" stop-color="#fff"/><stop offset="0.5" stop-color="#e0f0ff"/><stop offset="0.6" stop-color="#3898e0"/><stop offset="1" stop-color="#3898e0"/></linearGradient></defs><path d="M6 0.5h5.5q1 0 1 1v5l0.8 0.7v7.3q0 1-1 1H6z" fill="url(#fgb)"/><path d="M0.5 1.2q0-0.7 1-0.7h4.5q1 0 1 1v13.5l-1.5 0.8H1.5q-1 0-1-1z" fill="url(#fgf)"/><path d="M3.2 1.5h1.2v5.5h-0.8z" fill="#fff" opacity="0.9"/><rect x="11.2" y="8" width="1" height="5.5" fill="url(#fgi)"/></svg>
<div class="t" style="left:54px;top:436px;transform:scaleX(0.9665);transform-origin:0 0">ProcessExplorer</div>
<svg style="position:absolute;left:35px;top:451.5px" width="14" height="16" viewBox="0 0 14 16"><defs><linearGradient id="fgf" x1="0" x2="1"><stop offset="0" stop-color="#ecd060"/><stop offset="0.45" stop-color="#fbef98"/><stop offset="1" stop-color="#e4c450"/></linearGradient><linearGradient id="fgb" x1="0" x2="1"><stop offset="0" stop-color="#c8a438"/><stop offset="0.3" stop-color="#f0d870"/><stop offset="1" stop-color="#dcb840"/></linearGradient><linearGradient id="fgi" x1="0" y1="0" x2="0" y2="1"><stop offset="0" stop-color="#fff"/><stop offset="0.5" stop-color="#e0f0ff"/><stop offset="0.6" stop-color="#3898e0"/><stop offset="1" stop-color="#3898e0"/></linearGradient></defs><path d="M6 0.5h5.5q1 0 1 1v5l0.8 0.7v7.3q0 1-1 1H6z" fill="url(#fgb)"/><path d="M0.5 1.2q0-0.7 1-0.7h4.5q1 0 1 1v13.5l-1.5 0.8H1.5q-1 0-1-1z" fill="url(#fgf)"/><path d="M3.2 1.5h1.2v5.5h-0.8z" fill="#fff" opacity="0.9"/><rect x="11.2" y="8" width="1" height="5.5" fill="url(#fgi)"/></svg>
<div class="t" style="left:54px;top:455px;transform:scaleX(0.9454);transform-origin:0 0">rkill</div>
<svg style="position:absolute;left:22px;top:476px" width="9" height="9" viewBox="0 0 9 9"><rect x="0.5" y="0.5" width="8" height="8" fill="#fff" stroke="#808080"/><path d="M2 4.5h5M4.5 2v5" stroke="#000" stroke-width="1"/></svg>
<svg style="position:absolute;left:35px;top:470.5px" width="14" height="16" viewBox="0 0 14 16"><defs><linearGradient id="fgf" x1="0" x2="1"><stop offset="0" stop-color="#ecd060"/><stop offset="0.45" stop-color="#fbef98"/><stop offset="1" stop-color="#e4c450"/></linearGradient><linearGradient id="fgb" x1="0" x2="1"><stop offset="0" stop-color="#c8a438"/><stop offset="0.3" stop-color="#f0d870"/><stop offset="1" stop-color="#dcb840"/></linearGradient><linearGradient id="fgi" x1="0" y1="0" x2="0" y2="1"><stop offset="0" stop-color="#fff"/><stop offset="0.5" stop-color="#e0f0ff"/><stop offset="0.6" stop-color="#3898e0"/><stop offset="1" stop-color="#3898e0"/></linearGradient></defs><path d="M6 0.5h5.5q1 0 1 1v5l0.8 0.7v7.3q0 1-1 1H6z" fill="url(#fgb)"/><path d="M0.5 1.2q0-0.7 1-0.7h4.5q1 0 1 1v13.5l-1.5 0.8H1.5q-1 0-1-1z" fill="url(#fgf)"/><path d="M3.2 1.5h1.2v5.5h-0.8z" fill="#fff" opacity="0.9"/><rect x="11.2" y="8" width="1" height="5.5" fill="url(#fgi)"/></svg>
<div class="t" style="left:54px;top:474px;transform:scaleX(0.9682);transform-origin:0 0">Sytevaka</div>
<svg style="position:absolute;left:22px;top:495px" width="9" height="9" viewBox="0 0 9 9"><rect x="0.5" y="0.5" width="8" height="8" fill="#fff" stroke="#808080"/><path d="M2 4.5h5M4.5 2v5" stroke="#000" stroke-width="1"/></svg>
<svg style="position:absolute;left:35px;top:489.5px" width="14" height="16" viewBox="0 0 14 16"><defs><linearGradient id="fgf" x1="0" x2="1"><stop offset="0" stop-color="#ecd060"/><stop offset="0.45" stop-color="#fbef98"/><stop offset="1" stop-color="#e4c450"/></linearGradient><linearGradient id="fgb" x1="0" x2="1"><stop offset="0" stop-color="#c8a438"/><stop offset="0.3" stop-color="#f0d870"/><stop offset="1" stop-color="#dcb840"/></linearGradient><linearGradient id="fgi" x1="0" y1="0" x2="0" y2="1"><stop offset="0" stop-color="#fff"/><stop offset="0.5" stop-color="#e0f0ff"/><stop offset="0.6" stop-color="#3898e0"/><stop offset="1" stop-color="#3898e0"/></linearGradient></defs><path d="M6 0.5h5.5q1 0 1 1v5l0.8 0.7v7.3q0 1-1 1H6z" fill="url(#fgb)"/><path d="M0.5 1.2q0-0.7 1-0.7h4.5q1 0 1 1v13.5l-1.5 0.8H1.5q-1 0-1-1z" fill="url(#fgf)"/><path d="M3.2 1.5h1.2v5.5h-0.8z" fill="#fff" opacity="0.9"/><rect x="11.2" y="8" width="1" height="5.5" fill="url(#fgi)"/></svg>
<div class="t" style="left:54px;top:493px;transform:scaleX(0.9663);transform-origin:0 0">Tor Browser</div>
<svg style="position:absolute;left:35px;top:508.5px" width="14" height="16" viewBox="0 0 14 16"><defs><linearGradient id="fgf" x1="0" x2="1"><stop offset="0" stop-color="#ecd060"/><stop offset="0.45" stop-color="#fbef98"/><stop offset="1" stop-color="#e4c450"/></linearGradient><linearGradient id="fgb" x1="0" x2="1"><stop offset="0" stop-color="#c8a438"/><stop offset="0.3" stop-color="#f0d870"/><stop offset="1" stop-color="#dcb840"/></linearGradient><linearGradient id="fgi" x1="0" y1="0" x2="0" y2="1"><stop offset="0" stop-color="#fff"/><stop offset="0.5" stop-color="#e0f0ff"/><stop offset="0.6" stop-color="#3898e0"/><stop offset="1" stop-color="#3898e0"/></linearGradient></defs><path d="M6 0.5h5.5q1 0 1 1v5l0.8 0.7v7.3q0 1-1 1H6z" fill="url(#fgb)"/><path d="M0.5 1.2q0-0.7 1-0.7h4.5q1 0 1 1v13.5l-1.5 0.8H1.5q-1 0-1-1z" fill="url(#fgf)"/><path d="M3.2 1.5h1.2v5.5h-0.8z" fill="#fff" opacity="0.9"/><rect x="11.2" y="8" width="1" height="5.5" fill="url(#fgi)"/></svg>
<div class="t" style="left:54px;top:512px;transform:scaleX(0.9620);transform-origin:0 0">Txtr</div>
<svg style="position:absolute;left:22px;top:533px" width="9" height="9" viewBox="0 0 9 9"><rect x="0.5" y="0.5" width="8" height="8" fill="#fff" stroke="#808080"/><path d="M2 4.5h5M4.5 2v5" stroke="#000" stroke-width="1"/></svg>
<svg style="position:absolute;left:34px;top:528px" width="17" height="17" viewBox="0 0 17 17"><path d="M3.5 11.5l-3 3 3 2h12.5v-3z" fill="#fff" stroke="#101010" stroke-width="0.7"/><rect x="4" y="12.5" width="12" height="3.5" fill="#10a050" stroke="#101010" stroke-width="0.6"/><path d="M3.5 7.5l-3 3 3 2h12.5v-3z" fill="#fff" stroke="#101010" stroke-width="0.7"/><rect x="4" y="8.5" width="12" height="3.5" fill="#2060d0" stroke="#101010" stroke-width="0.6"/><path d="M0.5 1.5h11l4.5 3.5v4H4l-3.5-3.5z" fill="#901848" stroke="#101010" stroke-width="0.7"/><rect x="4" y="5" width="12" height="3.5" fill="#c02070" stroke="#101010" stroke-width="0.6"/><path d="M4.5 2.5h3l1 1.5h-3z" fill="#e0e040"/><rect x="4.5" y="5" width="1.2" height="11" fill="#e8d040"/></svg>
<div class="t" style="left:54px;top:531px;transform:scaleX(0.9604);transform-origin:0 0">waffa twitter arcive</div>
<div style="position:absolute;left:193px;top:109px;width:16px;height:461px;background:#d4d0c8;box-shadow:inset -1px -1px 0 #404040, inset 1px 1px 0 #d4d0c8, inset -2px -2px 0 #808080, inset 2px 2px 0 #fff"></div>
<svg style="position:absolute;left:199px;top:114px" width="5" height="3" viewBox="0 0 5 3"><path d="M0 3h5L2.5 0z" fill="#000"/></svg>
<div style="position:absolute;left:212px;top:109px;width:683px;height:461px;background:#fff"></div>
<div style="position:absolute;left:212px;top:109px;width:272px;height:23px;background:#d4d0c8;box-shadow:inset -1px -1px 0 #404040, inset 1px 1px 0 #fff, inset -2px -2px 0 #808080"></div>
<div style="position:absolute;left:484px;top:109px;width:120px;height:23px;background:#d4d0c8;box-shadow:inset -1px -1px 0 #404040, inset 1px 1px 0 #fff, inset -2px -2px 0 #808080"></div>
<div class="t" style="left:489px;top:115px;">Date modified</div>
<div style="position:absolute;left:604px;top:109px;width:120px;height:23px;background:#d4d0c8;box-shadow:inset -1px -1px 0 #404040, inset 1px 1px 0 #fff, inset -2px -2px 0 #808080"></div>
<div class="t" style="left:609px;top:115px;">Type</div>
<div style="position:absolute;left:724px;top:109px;width:80px;height:23px;background:#d4d0c8;box-shadow:inset -1px -1px 0 #404040, inset 1px 1px 0 #fff, inset -2px -2px 0 #808080"></div>
<div class="t" style="left:729px;top:115px;">Size</div>
<div style="position:absolute;left:804px;top:109px;width:91px;height:23px;background:#d4d0c8;box-shadow:inset -1px -1px 0 #404040, inset 0 1px 0 #fff, inset -2px -2px 0 #808080"></div>
<svg style="position:absolute;left:753px;top:120px" width="6" height="3" viewBox="0 0 6 3"><path d="M0 0h6l-3 3z" fill="#808080"/></svg>
<div style="position:absolute;left:212px;top:131px;width:683px;height:439px;overflow:hidden">
<div class="t" style="left:165.00px;top:12px;transform:scaleX(0.9931);transform-origin:0 0">p-amd64.iso</div>
<div class="t" style="left:159.00px;top:12px">o</div>
<div class="t" style="left:276px;top:12px;transform:scaleX(1.0377);transform-origin:0 0">13.05.2017 1:50</div>
<div class="t" style="left:396px;top:12px;transform:scaleX(0.9347);transform-origin:0 0">Disc Image File</div>
<div class="t" style="right:98px;top:12px;text-align:right;transform:scaleX(0.9460);transform-origin:100% 0">1 653 168 KB</div>
<div class="t" style="left:165.00px;top:34px;transform:scaleX(1.0125);transform-origin:0 0">agdaleena kirikus....</div>
<div class="t" style="left:156.00px;top:34px">M</div>
<div class="t" style="left:276px;top:34px;transform:scaleX(1.0381);transform-origin:0 0">11.07.2017 9:25</div>
<div class="t" style="left:396px;top:34px;transform:scaleX(0.9059);transform-origin:0 0">MP4 Video File</div>
<div class="t" style="right:98px;top:34px;text-align:right;transform:scaleX(0.9460);transform-origin:100% 0">1 270 834 KB</div>
<div class="t" style="left:165.00px;top:56px;transform:scaleX(0.9839);transform-origin:0 0">võimelised veel üh...</div>
<div class="t" style="left:276px;top:56px;transform:scaleX(1.0377);transform-origin:0 0">24.06.2017 1:26</div>
<div class="t" style="left:396px;top:56px;transform:scaleX(0.9059);transform-origin:0 0">MP4 Video File</div>
<div class="t" style="right:98px;top:56px;text-align:right;transform:scaleX(0.9478);transform-origin:100% 0">307 786 KB</div>
<div class="t" style="left:276px;top:78px;transform:scaleX(1.0377);transform-origin:0 0">15.05.2017 5:20</div>
<div class="t" style="left:396px;top:78px;transform:scaleX(0.9584);transform-origin:0 0">Wave Sound</div>
<div class="t" style="right:98px;top:78px;text-align:right;transform:scaleX(0.9478);transform-origin:100% 0">270 657 KB</div>
<div class="t" style="left:276px;top:100px;transform:scaleX(1.0377);transform-origin:0 0">22.07.2017 0:41</div>
<div class="t" style="left:396px;top:100px;transform:scaleX(0.9389);transform-origin:0 0">AVI Video File</div>
<div class="t" style="right:98px;top:100px;text-align:right;transform:scaleX(0.9478);transform-origin:100% 0">233 126 KB</div>
<div class="t" style="left:276px;top:122px;transform:scaleX(1.0377);transform-origin:0 0">15.05.2017 4:53</div>
<div class="t" style="left:396px;top:122px;transform:scaleX(0.9584);transform-origin:0 0">Wave Sound</div>
<div class="t" style="right:98px;top:122px;text-align:right;transform:scaleX(0.9478);transform-origin:100% 0">195 393 KB</div>
<div class="t" style="left:164.94px;top:144px;transform:scaleX(1.0021);transform-origin:0 0"> Powerful Secret ...</div>
<div class="t" style="left:159.00px;top:144px">d</div>
<div class="t" style="left:276px;top:144px;transform:scaleX(1.0377);transform-origin:0 0">18.07.2017 5:44</div>
<div class="t" style="left:396px;top:144px;transform:scaleX(0.9059);transform-origin:0 0">MP4 Video File</div>
<div class="t" style="right:98px;top:144px;text-align:right;transform:scaleX(0.9478);transform-origin:100% 0">158 770 KB</div>
<div class="t" style="left:160.00px;top:166px;transform:scaleX(1.0000);transform-origin:0 0">4</div>
<div class="t" style="left:276px;top:166px;transform:scaleX(1.0374);transform-origin:0 0">25.06.2017 10:06</div>
<div class="t" style="left:396px;top:166px;transform:scaleX(0.9059);transform-origin:0 0">MP4 Video File</div>
<div class="t" style="right:98px;top:166px;text-align:right;transform:scaleX(0.9478);transform-origin:100% 0">107 341 KB</div>
<div class="t" style="left:168.00px;top:188px;transform:scaleX(0.9903);transform-origin:0 0">p4</div>
<div class="t" style="left:159.00px;top:188px">m</div>
<div class="t" style="left:276px;top:188px;transform:scaleX(1.0377);transform-origin:0 0">21.07.2017 2:13</div>
<div class="t" style="left:396px;top:188px;transform:scaleX(0.9059);transform-origin:0 0">MP4 Video File</div>
<div class="t" style="right:98px;top:188px;text-align:right;transform:scaleX(0.9474);transform-origin:100% 0">80 162 KB</div>
<div class="t" style="left:168.00px;top:210px;transform:scaleX(1.0728);transform-origin:0 0">p4</div>
<div class="t" style="left:159.00px;top:210px">m</div>
<div class="t" style="left:276px;top:210px;transform:scaleX(1.0381);transform-origin:0 0">1.07.2017 7:33</div>
<div class="t" style="left:396px;top:210px;transform:scaleX(0.9059);transform-origin:0 0">MP4 Video File</div>
<div class="t" style="right:98px;top:210px;text-align:right;transform:scaleX(0.9474);transform-origin:100% 0">72 417 KB</div>
<div class="t" style="left:165.00px;top:232px;transform:scaleX(1.0024);transform-origin:0 0">14-028E (R4UAB)...</div>
<div class="t" style="left:160.00px;top:232px">0</div>
<div class="t" style="left:276px;top:232px;transform:scaleX(1.0377);transform-origin:0 0">11.07.2017 22:46</div>
<div class="t" style="left:396px;top:232px;transform:scaleX(0.9059);transform-origin:0 0">MP4 Video File</div>
<div class="t" style="right:98px;top:232px;text-align:right;transform:scaleX(0.9474);transform-origin:100% 0">60 307 KB</div>
<div class="t" style="left:276px;top:254px;transform:scaleX(1.0377);transform-origin:0 0">15.05.2017 5:41</div>
<div class="t" style="left:396px;top:254px;transform:scaleX(0.9584);transform-origin:0 0">Wave Sound</div>
<div class="t" style="right:98px;top:254px;text-align:right;transform:scaleX(0.9474);transform-origin:100% 0">48 233 KB</div>
<div class="t" style="left:174.00px;top:276px;transform:scaleX(0.9538);transform-origin:0 0">Kuzzer &#x27;Kaunis m...</div>
<div class="t" style="left:164.94px;top:276px">t.</div>
<div class="t" style="left:276px;top:276px;transform:scaleX(1.0377);transform-origin:0 0">25.07.2017 7:18</div>
<div class="t" style="left:396px;top:276px;transform:scaleX(0.9059);transform-origin:0 0">MP4 Video File</div>
<div class="t" style="right:98px;top:276px;text-align:right;transform:scaleX(0.9474);transform-origin:100% 0">41 710 KB</div>
<div class="t" style="left:168.00px;top:298px;transform:scaleX(0.9637);transform-origin:0 0">palad.webm</div>
<div class="t" style="left:163.00px;top:298px">l</div>
<div class="t" style="left:276px;top:298px;transform:scaleX(1.0374);transform-origin:0 0">23.07.2017 10:46</div>
<div class="t" style="left:396px;top:298px;transform:scaleX(0.8971);transform-origin:0 0">WEBM Video File</div>
<div class="t" style="right:98px;top:298px;text-align:right;transform:scaleX(0.9474);transform-origin:100% 0">35 315 KB</div>
<div class="t" style="left:276px;top:320px;transform:scaleX(1.0377);transform-origin:0 0">13.07.2017 6:48</div>
<div class="t" style="left:396px;top:320px;transform:scaleX(0.9059);transform-origin:0 0">MP4 Video File</div>
<div class="t" style="right:98px;top:320px;text-align:right;transform:scaleX(0.9474);transform-origin:100% 0">26 622 KB</div>
<div class="t" style="left:164.00px;top:342px;transform:scaleX(0.9522);transform-origin:0 0">e&#x27;.mp4</div>
<div class="t" style="left:276px;top:342px;transform:scaleX(1.0374);transform-origin:0 0">24.06.2017 21:24</div>
<div class="t" style="left:396px;top:342px;transform:scaleX(0.9059);transform-origin:0 0">MP4 Video File</div>
<div class="t" style="right:98px;top:342px;text-align:right;transform:scaleX(0.9474);transform-origin:100% 0">23 943 KB</div>
<div class="t" style="left:165.00px;top:364px;transform:scaleX(0.9314);transform-origin:0 0">LEPLAND &#x27;Et uus s...</div>
<div class="t" style="left:276px;top:364px;transform:scaleX(1.0374);transform-origin:0 0">24.06.2017 21:25</div>
<div class="t" style="left:396px;top:364px;transform:scaleX(0.9059);transform-origin:0 0">MP4 Video File</div>
<div class="t" style="right:98px;top:364px;text-align:right;transform:scaleX(0.9474);transform-origin:100% 0">20 413 KB</div>
<div class="t" style="left:165.00px;top:386px;transform:scaleX(0.9522);transform-origin:0 0">d&#x27;.mp4</div>
<div class="t" style="left:158.00px;top:386px">a</div>
<div class="t" style="left:276px;top:386px;transform:scaleX(1.0374);transform-origin:0 0">24.06.2017 21:23</div>
<div class="t" style="left:396px;top:386px;transform:scaleX(0.9059);transform-origin:0 0">MP4 Video File</div>
<div class="t" style="right:98px;top:386px;text-align:right;transform:scaleX(0.9466);transform-origin:100% 0">18 711 KB</div>
<div class="t" style="left:164.00px;top:408px;transform:scaleX(0.9701);transform-origin:0 0">osmos 2504 Satelli...</div>
<div class="t" style="left:276px;top:408px;transform:scaleX(1.0381);transform-origin:0 0">11.07.2017 23:11</div>
<div class="t" style="left:396px;top:408px;transform:scaleX(0.8971);transform-origin:0 0">WEBM Video File</div>
<div class="t" style="right:98px;top:408px;text-align:right;transform:scaleX(0.9474);transform-origin:100% 0">15 486 KB</div>
<div class="t" style="left:164.00px;top:430px;transform:scaleX(0.9573);transform-origin:0 0">llinn, Estonia.mp4</div>
<div class="t" style="left:276px;top:430px;transform:scaleX(1.0381);transform-origin:0 0">11.07.2017 2:33</div>
<div class="t" style="left:396px;top:430px;transform:scaleX(0.9059);transform-origin:0 0">MP4 Video File</div>
<div class="t" style="right:98px;top:430px;text-align:right;transform:scaleX(0.9474);transform-origin:100% 0">12 922 KB</div>
</div>
<div style="position:absolute;left:895px;top:109px;width:16px;height:461px;background:repeating-conic-gradient(#d4d0c8 0 25%,#fff 0 50%) 0 0/2px 2px"></div>
<div style="position:absolute;left:895px;top:109px;width:16px;height:16px;background:#d4d0c8;box-shadow:inset -1px -1px 0 #404040, inset 1px 1px 0 #d4d0c8, inset -2px -2px 0 #808080, inset 2px 2px 0 #fff"></div>
<svg style="position:absolute;left:899px;top:115px" width="7" height="4" viewBox="0 0 7 4"><path d="M0 4h7L3.5 0z" fill="#000"/></svg>
<div style="position:absolute;left:895px;top:125px;width:16px;height:147px;background:#d4d0c8;box-shadow:inset -1px -1px 0 #404040, inset 1px 1px 0 #d4d0c8, inset -2px -2px 0 #808080, inset 2px 2px 0 #fff"></div>
<div style="position:absolute;left:895px;top:554px;width:16px;height:16px;background:#d4d0c8;box-shadow:inset -1px -1px 0 #404040, inset 1px 1px 0 #d4d0c8, inset -2px -2px 0 #808080, inset 2px 2px 0 #fff"></div>
<svg style="position:absolute;left:899px;top:560px" width="7" height="4" viewBox="0 0 7 4"><path d="M0 0h7L3.5 4z" fill="#000"/></svg>
<div style="position:absolute;left:914px;top:109px;width:68px;height:461px;background:#fff"></div>
<div class="t" style="left:920px;top:327px;transform:scaleX(0.9543);transform-origin:0 0">Select a file</div>
<div class="t" style="left:920px;top:340px;">to preview.</div>
<div style="position:absolute;left:4px;top:575px;width:978px;height:56px;background:#fff"></div>
<div class="t" style="left:90px;top:581px;font-size:12.5px;line-height:13px">58 items</div>
<svg style="position:absolute;left:22px;top:598px" width="52" height="26" viewBox="0 0 52 26"><defs><linearGradient id="hf" x1="0" y1="0" x2="1" y2="0.3"><stop offset="0" stop-color="#c4c4cc"/><stop offset="0.5" stop-color="#eeeef6"/><stop offset="1" stop-color="#c0c0c8"/></linearGradient><linearGradient id="hr" x1="0" y1="0" x2="0" y2="1"><stop offset="0" stop-color="#e4e4e4"/><stop offset="1" stop-color="#a8a8a8"/></linearGradient></defs><path d="M1.5 9.5L23 1.5L47.5 4.5L28 16Z" fill="#ececec" stroke="#d0d0d0" stroke-width="0.6"/><ellipse cx="29" cy="7.5" rx="11" ry="4" fill="#f4f4f4" stroke="#c8d4e0" stroke-width="0.8"/><ellipse cx="26" cy="2.8" rx="2.2" ry="1" fill="#404040"/><path d="M1.5 9.5L28 16L28 23.5L2.5 17.5Z" fill="url(#hf)" stroke="#8c8c8c" stroke-width="0.8" stroke-linejoin="round"/><path d="M28 16L47.5 4.5L47.5 12.5L28 23.5Z" fill="url(#hr)" stroke="#a0a0a0" stroke-width="0.6"/><rect x="24.5" y="16.5" width="2.2" height="6" fill="#40a040"/><rect x="26.2" y="17" width="1.2" height="5.5" fill="#202020"/></svg>
<div style="position:absolute;left:142px;top:117px;width:233px;height:518px;background:#d4d0c8"></div>
<div style="position:absolute;left:143px;top:118px;width:230px;height:1px;background:#fff"></div>
<div style="position:absolute;left:143px;top:118px;width:1px;height:517px;background:#fff"></div>
<div style="position:absolute;left:373px;top:117px;width:1px;height:518px;background:#808080"></div>
<div style="position:absolute;left:374px;top:117px;width:1px;height:518px;background:#404040"></div>
<svg style="position:absolute;left:133px;top:302px" width="21" height="21" viewBox="0 0 21 21"><defs><linearGradient id="cur" x1="0.3" y1="0" x2="0.5" y2="1"><stop offset="0" stop-color="#a8c8d8"/><stop offset="0.5" stop-color="#60b0c0"/><stop offset="1" stop-color="#10e8d8"/></linearGradient></defs><circle cx="10.2" cy="9.8" r="8" fill="none" stroke="url(#cur)" stroke-width="3"/><path d="M4.5 4.5A8 8 0 0 1 14 2.8" stroke="#e0f0f8" stroke-width="1.4" fill="none"/><path d="M17.8 8A8 8 0 0 1 16.5 14.5" stroke="#3a7a88" stroke-width="2.4" fill="none"/></svg>
</body></html>
